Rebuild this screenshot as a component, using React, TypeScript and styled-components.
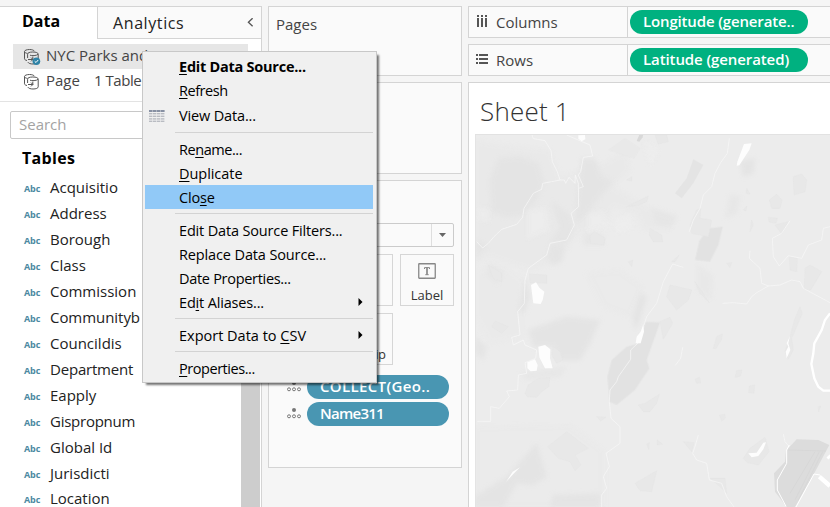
import React from 'react';
import styled, { createGlobalStyle, css } from 'styled-components';

const line = '#d4d4d4';
const panel = '#fafafa';

const Global = createGlobalStyle`
  * { box-sizing: border-box; }
  body { margin: 0; background: #f5f5f5; font-family: 'Open Sans', 'Noto Sans', sans-serif; overflow: hidden; }
  svg { display: block; flex: none; }
`;

const Workspace = styled.div`
  position: relative;
  width: 830px;
  height: 507px;
  padding-top: 6px;
  display: flex;
  gap: 6px;
  overflow: hidden;
  font-size: 15px;
  color: #333;
  white-space: nowrap;
`;

/* ---------- data pane ---------- */

const DataPane = styled.aside`
  width: 262px;
  flex: none;
  display: flex;
  flex-direction: column;
  background: #fff;
  border-top: 1px solid ${line};
  border-right: 1px solid ${line};
`;

const Tabs = styled.div`
  display: flex;
  flex: none;
  height: 32px;
`;

const ActiveTab = styled.div`
  width: 97px;
  padding-left: 22px;
  font: bold 16px/29px 'Open Sans', sans-serif;
  color: #000;
`;

const Tab = styled.div`
  flex: 1;
  display: flex;
  align-items: center;
  justify-content: space-between;
  padding: 0 7px 0 15px;
  background: ${panel};
  border-left: 1px solid ${line};
  border-bottom: 1px solid ${line};
  font-size: 16px;
  letter-spacing: 0.6px;
  color: #222;
`;

const Sources = styled.div`
  flex: none;
  height: 63px;
  padding: 5px 13px 0;
  border-bottom: 1px solid #e3e3e3;
`;

const SourceRow = styled.div<{ $active?: boolean }>`
  display: flex;
  align-items: center;
  width: 235px;
  height: 25px;
  padding-left: 10px;
  gap: 5px;
  line-height: 21px;
  color: #444;
  background: ${p => (p.$active ? '#e6e6e6' : 'transparent')};
`;

const SourceName = styled.span<{ $gap?: number; $spacing?: number }>`
  margin-right: ${p => p.$gap ?? 0}px;
  padding-bottom: 2px;
  letter-spacing: ${p => p.$spacing ?? 0}px;
`;

const SearchBox = styled.div`
  flex: none;
  height: 28px;
  margin: 9px 40px 0 10px;
  padding-left: 8px;
  border: 1px solid #c8c8c8;
  border-radius: 2px;
  line-height: 25px;
  color: #a3a3a3;
`;

const Heading = styled.div`
  flex: none;
  padding-left: 22px;
  font: bold 16px/20px 'Open Sans', sans-serif;
  letter-spacing: 0.3px;
  color: #000;
`;

const TablesArea = styled.div`
  display: flex;
  flex: 1;
  min-height: 0;
  padding: 9px 1px 0 0;
`;

const FieldColumn = styled.div`
  flex: 1;
`;

const FieldList = styled.div`
  padding-top: 7px;
`;

const Field = styled.div`
  display: flex;
  align-items: center;
  height: 26px;
  padding-left: 24px;
  line-height: 21px;
  color: #222;
  &:last-child { height: 24px; padding-top: 1px; }
`;

const TypeTag = styled.span`
  width: 26px;
  font-size: 9px;
  font-weight: 700;
  letter-spacing: -0.1px;
  color: #4b89a1;
`;

const FieldName = styled.span<{ $spacing?: number }>`
  padding-bottom: 2px;
  letter-spacing: ${p => p.$spacing ?? 0}px;
`;

const Scrollbar = styled.div`
  width: 19px;
  background: #cdcdcd;
`;

/* ---------- cards ---------- */

const Cards = styled.section`
  width: 194px;
  flex: none;
  display: flex;
  flex-direction: column;
  gap: 6px;
`;

const Card = styled.div<{ $height: number }>`
  height: ${p => p.$height}px;
  flex: none;
  background: ${panel};
  border: 1px solid ${line};
`;

const CardTitle = styled.div`
  padding: 6px 7px 0;
  line-height: 22px;
  color: #444;
`;

const MarksCard = styled(Card)`
  padding: 42px 7px 0 9px;
`;

const MarkType = styled.div`
  display: flex;
  justify-content: flex-end;
  height: 24px;
  margin-bottom: 7px;
  border: 1px solid #cbcbcb;
  border-radius: 2px;
`;

const DropButton = styled.div`
  display: grid;
  place-items: center;
  width: 22px;
  border-left: 1px solid #dedede;
`;

const MarkGrid = styled.div`
  display: grid;
  grid-template-columns: repeat(3, 54px);
  grid-auto-rows: 52px;
  gap: 7px;
`;

const MarkButton = styled.div<{ $spacing?: number }>`
  display: flex;
  flex-direction: column;
  align-items: center;
  justify-content: flex-end;
  gap: 7px;
  padding-bottom: 1px;
  border: 1px solid #d6d6d6;
  font-size: 13px;
  line-height: 18px;
  letter-spacing: ${p => p.$spacing ?? 0}px;
  color: #333;
`;

const MarkPills = styled.div`
  display: flex;
  flex-direction: column;
  gap: 3px;
  padding: 10px 4px 0 9px;
`;

const MarkRow = styled.div`
  display: flex;
  align-items: center;
  gap: 6px;
  height: 24px;
`;

const Pill = styled.div<{ $tone: 'green' | 'blue'; $spacing?: number }>`
  height: 24px;
  padding: 0 0 0 13px;
  border-radius: 12px;
  color: #fff;
  font-weight: 600;
  line-height: 23px;
  letter-spacing: ${p => p.$spacing ?? 0}px;
  ${p =>
    p.$tone === 'green'
      ? css`width: 178px; background: #00b180;`
      : css`width: 142px; background: #4996b2;`}
`;

/* ---------- view ---------- */

const View = styled.main`
  flex: 1;
  display: flex;
  flex-direction: column;
  gap: 6px;
  min-width: 0;
`;

const Shelf = styled.div`
  display: flex;
  flex: none;
  height: 32px;
  background: ${panel};
  border: 1px solid ${line};
  border-right: 0;
`;

const ShelfLabel = styled.div`
  display: flex;
  align-items: center;
  width: 159px;
  padding-left: 7px;
  gap: 7px;
  border-right: 1px solid ${line};
  color: #444;
`;

const ShelfDrop = styled.div`
  padding: 3px 2px;
`;

const Sheet = styled.div`
  flex: 1;
  padding-left: 6px;
  background: #fff;
  border-top: 1px solid ${line};
  border-left: 1px solid ${line};
`;

const SheetTitle = styled.div`
  height: 51px;
  padding: 9px 0 0 5px;
  font-size: 26px;
  font-weight: 300;
  line-height: 38px;
  letter-spacing: 0.2px;
  color: #333;
`;

/* ---------- context menu ---------- */

const Menu = styled.div`
  position: absolute;
  left: 142px;
  top: 51px;
  width: 235px;
  height: 332px;
  padding: 3px 3px 0 2px;
  background: #f0f0f0;
  border: 1px solid #c8c8c8;
  box-shadow: 3px 3px 2px -1px rgba(0, 0, 0, 0.55);
  color: #000;
`;

const Item = styled.div<{ $active?: boolean; $bold?: boolean; $tall?: boolean; $lift?: boolean; $spacing: number }>`
  display: flex;
  align-items: center;
  height: ${p => (p.$tall ? 25 : 24)}px;
  padding-right: 10px;
  padding-bottom: ${p => (p.$lift ? 2 : 0)}px;
  font-size: 14.5px;
  font-weight: ${p => (p.$bold ? 700 : 400)};
  letter-spacing: ${p => p.$spacing}px;
  background: ${p => (p.$active ? '#91c9f7' : 'transparent')};
`;

const ItemIcon = styled.span`
  width: 34px;
  padding-left: 4px;
`;

const ItemText = styled.span`
  flex: 1;
  u { text-decoration-thickness: 1px; text-underline-offset: 2px; text-decoration-skip-ink: none; }
`;

const Separator = styled.div`
  height: 9px;
  padding-top: 4px;
  margin-left: 30px;
  &::after { content: ''; display: block; height: 1px; background: #d3d3d3; }
`;

/* ---------- icons ---------- */

const SourceIcon = ({ linked }: { linked?: boolean }) => (
  <svg width="18" height="18" viewBox="0 0 18 18" fill="none" stroke="#555" strokeWidth="1">
    <path d="M4 12.5C2.5 12.2 1.5 11.6 1.5 10.8V3.5C1.5 2.4 3.7 1.5 6.5 1.5C9 1.5 11 2.2 11.4 3.2" />
    <path d="M1.5 3.8C1.8 4.6 3 5.2 4.5 5.4" />
    <path d="M4.6 10V6.2C4.6 4.8 6.5 4 9.8 4S15.2 4.8 15.2 6.2V13.8C15.2 15.2 13 16 10 16C7.6 16 5.6 15.4 4.9 14.2" />
    <path d="M7 7.2C8.6 7.9 13.6 7.9 15.2 6.2" />
    <path d="M5 11.5H9.8V8.6M8 13.4L9.9 11.5L8 9.6" />
    {linked && (
      <>
        <circle cx="13.4" cy="13.2" r="3.8" fill="#2f83a6" stroke="none" />
        <path d="M11.7 13.3L13 14.5L15.2 12" stroke="#fff" />
      </>
    )}
  </svg>
);

const TableIcon = () => (
  <svg width="16" height="12" viewBox="0 0 16 12">
    {[0, 4, 8, 12].map(x => (
      <g key={x} fill="#b9bcc2">
        <rect x={x} y="0" width="3.6" height="2" fill="#8790a3" />
        {[3, 5.6, 8.2, 10.6].map(y => (
          <rect key={y} x={x} y={y} width="3.4" height="1.4" />
        ))}
      </g>
    ))}
  </svg>
);

const DetailIcon = () => (
  <svg width="14" height="12" viewBox="0 0 14 12" fill="none" stroke="#777">
    <circle cx="7" cy="2.1" r="2" fill="#777" stroke="none" />
    <circle cx="2" cy="8.3" r="1.5" />
    <circle cx="7" cy="8.3" r="1.5" />
    <circle cx="12" cy="8.3" r="1.5" />
  </svg>
);

const LabelIcon = () => (
  <svg width="18" height="16" viewBox="0 0 18 16" fill="none" stroke="#888">
    <rect x="0.75" y="0.75" width="16.5" height="14.5" rx="0.5" strokeWidth="1.3" />
    <path d="M6.5 6V4.6H11.5V6M7.3 11.7H10.7" strokeWidth="1" />
    <path d="M9 4.5V11.7" strokeWidth="1.7" />
  </svg>
);

const ColumnsIcon = () => (
  <svg width="13" height="14" viewBox="0 0 13 14" fill="#555">
    {[1, 5, 9].map(x => (
      <g key={x}>
        <rect x={x} y="0" width="2" height="2" />
        <rect x={x} y="3" width="2" height="9" />
      </g>
    ))}
  </svg>
);

const RowsIcon = () => (
  <svg width="13" height="14" viewBox="0 0 13 14" fill="#555">
    {[1, 5, 9].map(y => (
      <g key={y}>
        <rect x="0" y={y} width="2" height="2" />
        <rect x="3" y={y} width="9" height="2" />
      </g>
    ))}
  </svg>
);

const Chevron = () => (
  <svg width="7" height="10" viewBox="0 0 7 10" fill="none" stroke="#555" strokeWidth="1.3">
    <path d="M5.6 0.2L1.4 4.2L5.6 8.2" />
  </svg>
);

const Submenu = () => (
  <svg width="5" height="8" viewBox="0 0 5 8">
    <path d="M0.5 0L4.5 4L0.5 8Z" />
  </svg>
);

const Basemap = () => (
  <svg width="355" height="373" viewBox="15 12 1065 1119">
    <defs>
      <filter id="soft" x="-20%" y="-20%" width="140%" height="140%">
        <feGaussianBlur stdDeviation="6" />
      </filter>
    </defs>
    <rect x="15" y="12" width="1065" height="1119" fill="#ececec" />
    <g filter="url(#soft)" fill="#e9e9e9">
      <path d="M15 30L60 40L240 60L270 140L400 100L470 60L480 120L430 170L540 235L620 265L600 300L520 300L500 250L430 230L400 290L330 310L250 400L180 420L60 380L15 400Z" />
      <path d="M15 420L100 400L160 450L160 620L60 640L15 560Z" opacity=".7" />
      <path d="M350 430L450 420L520 470L480 560L400 530Z" opacity=".5" />
      <path d="M15 890L300 885L400 960L400 1131L15 1131Z" opacity=".5" />
    </g>
    <g filter="url(#soft)" fill="#e4e4e4">
      <path d="M85 85L150 80L205 100L220 160L200 210L160 255L110 262L65 245L60 150Z" />
      <path d="M335 85L375 85L395 140L430 155L385 205L350 250L315 285L322 190Z" />
      <path d="M245 215L300 255L310 300L290 340L240 335L270 290Z" opacity=".8" />
      <path d="M245 340L285 350L275 395L250 405L230 380Z" />
      <path d="M175 600L290 560L390 570L360 640L330 690L270 690L250 650L190 650Z" />
      <path d="M165 440L180 500L165 545L145 545Z" />
      <path d="M15 1131L15 1100L110 1040L200 940L230 1040L190 1065L140 1060L100 1131Z" />
      <path d="M510 490L530 500L510 570L495 600L488 560Z" />
      <path d="M810 95L855 85L850 130L820 140Z" />
      <path d="M545 235L620 260L600 290L560 280Z" opacity=".7" />
      <path d="M340 310L400 315L400 345L340 345Z" opacity=".7" />
      <path d="M250 1095L390 1090L390 1131L240 1131Z" />
      <path d="M780 195L810 200L800 250L765 265Z" opacity=".5" />
      <path d="M680 400L730 440L725 510L680 480Z" opacity=".4" />
      <path d="M15 330L50 345L20 385ZM15 620L50 650L40 690L15 670Z" opacity=".8" />
      <path d="M60 400L100 430L80 460L50 430ZM150 730L290 710L270 740L170 750Z" opacity=".5" />
    </g>
    <g filter="url(#soft)" fill="#efefef" opacity=".7">
      <path d="M20 230L60 235L60 280L20 270ZM170 240L230 230L240 300L170 330ZM350 250L400 240L420 290L350 305ZM520 30L570 60L540 110ZM430 270L480 250L490 300L440 310Z" opacity=".7" />
    </g>
    <g fill="#e2e2e2">
      <path d="M527 576L570 577L530 690L538 715L495 780L440 825L418 815L412 740L425 690L470 650L505 640Z" />
      <path d="M688 333L715 295L758 290L745 345L720 395L675 390Z" />
      <path d="M670 88L700 105L670 160L635 205L615 190L650 145Z" opacity=".8" />
      <path d="M520 12L518 22L508 35L500 33L508 14Z" fill="#d9d9d9" />
    </g>
    <g fill="#e8e8e8" stroke="#e4e4e4" strokeWidth="1.2">
      <path d="M970 140L995 132L1010 150L1005 185L972 195Z" />
      <path d="M898 210L920 193L936 210L930 235L905 235Z" />
      <path d="M680 240L692 235L690 265L725 270L715 320L665 310L660 285Z" />
      <path d="M540 295L575 315L578 335L550 335L538 315Z" />
      <path d="M360 318L372 305L405 325L402 345L362 340Z" />
      <path d="M178 432L230 435L230 460L180 458Z" />
      <path d="M55 405L95 430L95 455L70 445Z" />
      <path d="M65 590L75 573L115 590L95 610Z" />
      <path d="M600 465L665 480L655 510L620 540L590 500Z" />
      <path d="M570 575L600 562L608 580L580 628Z" />
      <path d="M165 790L175 765L205 745L240 743L236 770L215 785L200 802L172 800Z" />
      <path d="M505 825L525 820L568 793L560 820L540 845L520 845Z" />
      <path d="M730 655L740 620L757 612L755 628L738 656Z" />
      <path d="M795 742L800 722L816 720L812 738Z" />
      <path d="M838 768L854 765L852 790L836 788Z" />
      <path d="M748 855L765 853L766 865L755 873Z" />
      <path d="M675 748L688 742L692 758L680 760Z" />
      <path d="M1005 415L1020 405L1055 425L1022 480L1003 478Z" />
      <path d="M958 380L982 385L980 425L960 420Z" />
      <path d="M975 565L990 530L997 550L965 625L970 660L955 688L945 665L960 620Z" />
      <path d="M233 950L290 905L355 955L315 975L333 1005L315 1022L300 995L265 985Z" />
      <path d="M820 985L840 955L885 922L897 965L865 1005L832 998Z" />
      <path d="M495 1060L560 1022L545 1085L510 1082Z" />
      <path d="M415 60L465 25L510 55L492 85Z" opacity=".6" />
      <path d="M555 15L590 15L595 35L565 42Z" />
      <path d="M915 285L955 275L935 312ZM895 262L922 265L918 280L897 276Z" />
      <path d="M470 230L535 198L530 215L505 225Z" />
      <path d="M250 650L270 665L278 690L260 700L245 675Z" />
      <path d="M640 935L672 938L665 965ZM380 860L408 862L392 873ZM562 930L577 942L562 945ZM530 942L538 938L536 958Z" />
      <path d="M770 400L785 398L780 413ZM675 455L718 518L690 490ZM470 150L485 140L485 153ZM820 240L830 228L828 243ZM845 270L850 285L840 305ZM605 395L628 375L615 395ZM475 395L488 390L485 410Z" />
      <path d="M720 1045L765 1045L770 1090L750 1070ZM1045 830L1052 828L1046 845ZM830 175L840 192L828 190Z" />
    </g>
    <g fill="none" stroke="#f7f7f7" strokeWidth="2.2">
      <path d="M185 12L190 26L225 32L243 62L247 95L262 125L270 150L245 155L218 160L215 178L190 190L162 235L158 262L140 283L95 298L72 320L55 340L38 354L20 335" />
      <path d="M270 150L283 150L287 160L297 142L315 160L316 135L325 160L326 230L303 250L313 285L290 330L240 340L230 375L175 415L165 450L163 520L143 545L150 615L125 622L130 645L160 630L165 645L200 660L197 685L165 698L170 730L145 735L143 780L110 783L118 800L88 835L62 830L62 874L22 874" />
      <path d="M290 15L360 45L368 78L340 82L332 125L325 135L340 170L326 175" />
      <path d="M778 25L772 70L752 98L735 130L725 170L700 195L690 235L670 270L658 305" />
      <path d="M640 412L608 402L580 455L560 520L530 560L522 585" strokeWidth="2" />
      <path d="M505 638L482 660L482 688L445 740L440 755L420 780L418 815L423 865L450 890L450 940L408 970L418 1010L400 1040L410 1075L395 1095L395 1131" />
      <path d="M840 362L838 385L870 415L875 460L895 468L930 465L965 450L990 455L1000 475L1080 518" />
      <path d="M895 468L860 488L845 500L830 522L790 518L758 520" />
      <path d="M960 272L935 310L907 325L910 380L928 408L955 377L995 385L1015 345L1055 330L1060 295L1080 290" />
      <path d="M685 915L675 950L668 970L680 990L710 1000L718 1050L755 1060L770 1100L792 1131" />
      <path d="M638 652L632 685L616 706M940 912L945 935L958 950" />
    </g>
    <g fill="#fdfdfd">
      <path d="M183 465L198 457L208 473L223 485L218 510L212 522L190 520L186 490Z" />
      <path d="M205 650L225 645L241 658L240 685L248 715L225 715L208 682Z" />
      <path d="M172 697L195 688L203 705L200 722L182 724L172 715Z" />
      <path d="M802 95L822 42L845 40L838 60L808 106L800 107Z" />
      <path d="M520 583L522 605L512 640L497 640L500 620L512 605Z" />
      <path d="M325 16L345 15L346 28L335 34L325 26Z" />
      <path d="M835 970L860 968L880 938L888 937L880 958L865 978L845 982Z" />
      <path d="M108 1056L128 1025L150 1012L130 1032Z" />
      <path d="M960 618L955 640L961 660L950 685L947 665L955 650L950 640Z" />
    </g>
    <path d="M948 962L980 928L1045 930L1078 945L1030 1035L975 1131L950 1131L915 1085L912 1030L945 995Z" fill="#dcdcdc" />
    <path d="M955 960L1068 963M1058 965L985 1110M1048 965L975 1110M1035 965L960 1090" stroke="#d5d5d5" strokeWidth="2" fill="none" />
    <path d="M958 945L950 960L950 1000L922 1050L922 1080L948 1129M978 1131L1032 1032L1050 1035" stroke="#fff" strokeWidth="3" fill="none" />
    <path d="M1080 550L1065 570L1055 600L1033 640L1030 670L1024 702L1033 745L1045 770L1060 782L1080 782" stroke="#fff" strokeWidth="7" fill="none" />
    <path d="M1048 1040L1080 1068M1074 978L1080 984" stroke="#fff" strokeWidth="13" fill="none" />
    <path d="M15 13.5H1080M16 12V1131" stroke="#e2e2e2" strokeWidth="3" />
  </svg>
);

const fields: [string, number][] = [
  ['Acquisitio', 0], ['Address', 0], ['Borough', 0], ['Class', 0], ['Commission', 0],
  ['Communityb', -0.05], ['Councildis', 0], ['Department', -0.2], ['Eapply', 0],
  ['Gispropnum', -0.25], ['Global Id', 0], ['Jurisdicti', 0], ['Location', 0],
];

export default function App() {
  return (
    <>
      <Global />
      <Workspace>
        <DataPane>
          <Tabs>
            <ActiveTab>Data</ActiveTab>
            <Tab>Analytics<Chevron /></Tab>
          </Tabs>
          <Sources>
            <SourceRow $active>
              <SourceIcon linked />
              <SourceName>NYC Parks and</SourceName>
            </SourceRow>
            <SourceRow>
              <SourceIcon />
              <SourceName $gap={9}>Page</SourceName>
              <SourceName $spacing={-0.45}>1 Table</SourceName>
            </SourceRow>
          </Sources>
          <SearchBox>Search</SearchBox>
          <TablesArea>
            <FieldColumn>
              <Heading>Tables</Heading>
              <FieldList>
                {fields.map(([name, spacing]) => (
                  <Field key={name}>
                    <TypeTag>Abc</TypeTag>
                    <FieldName $spacing={spacing}>{name}</FieldName>
                  </Field>
                ))}
              </FieldList>
            </FieldColumn>
            <Scrollbar />
          </TablesArea>
        </DataPane>

        <Cards>
          <Card $height={70}><CardTitle>Pages</CardTitle></Card>
          <Card $height={92} />
          <MarksCard $height={288}>
            <MarkType>
              <DropButton>
                <svg width="7" height="4" viewBox="0 0 7 4"><path d="M0 0H7L3.5 4Z" fill="#666" /></svg>
              </DropButton>
            </MarkType>
            <MarkGrid>
              <MarkButton />
              <MarkButton />
              <MarkButton><LabelIcon />Label</MarkButton>
              <MarkButton />
              <MarkButton $spacing={-0.4}>Tooltip</MarkButton>
            </MarkGrid>
            <MarkPills>
              <MarkRow><DetailIcon /><Pill $tone="blue" $spacing={0.35}>COLLECT(Geo..</Pill></MarkRow>
              <MarkRow><DetailIcon /><Pill $tone="blue" $spacing={-0.75}>Name311</Pill></MarkRow>
            </MarkPills>
          </MarksCard>
        </Cards>

        <View>
          <Shelf>
            <ShelfLabel><ColumnsIcon />Columns</ShelfLabel>
            <ShelfDrop><Pill $tone="green" $spacing={-0.15}>Longitude (generate..</Pill></ShelfDrop>
          </Shelf>
          <Shelf>
            <ShelfLabel><RowsIcon />Rows</ShelfLabel>
            <ShelfDrop><Pill $tone="green" $spacing={-0.1}>Latitude (generated)</Pill></ShelfDrop>
          </Shelf>
          <Sheet>
            <SheetTitle>Sheet 1</SheetTitle>
            <Basemap />
          </Sheet>
        </View>

        <Menu>
          <Item $bold $lift $spacing={-0.25}><ItemIcon /><ItemText><u>E</u>dit Data Source...</ItemText></Item>
          <Item $lift $spacing={-0.45}><ItemIcon /><ItemText><u>R</u>efresh</ItemText></Item>
          <Item $tall $spacing={-0.15}><ItemIcon><TableIcon /></ItemIcon><ItemText>View Data...</ItemText></Item>
          <Separator />
          <Item $spacing={-0.45}><ItemIcon /><ItemText>Re<u>n</u>ame...</ItemText></Item>
          <Item $spacing={-0.05}><ItemIcon /><ItemText><u>D</u>uplicate</ItemText></Item>
          <Item $active $spacing={-0.2}><ItemIcon /><ItemText>Clo<u>s</u>e</ItemText></Item>
          <Separator />
          <Item $spacing={-0.16}><ItemIcon /><ItemText>Edit Data Source Filters...</ItemText></Item>
          <Item $spacing={-0.13}><ItemIcon /><ItemText>Replace Data Source...</ItemText></Item>
          <Item $spacing={-0.3}><ItemIcon /><ItemText>Date Properties...</ItemText></Item>
          <Item $spacing={-0.17}><ItemIcon /><ItemText>Ed<u>i</u>t Aliases...</ItemText><Submenu /></Item>
          <Separator />
          <Item $spacing={0}><ItemIcon /><ItemText>Export Data to <u>C</u>SV</ItemText><Submenu /></Item>
          <Separator />
          <Item $spacing={-0.45}><ItemIcon /><ItemText><u>P</u>roperties...</ItemText></Item>
        </Menu>
      </Workspace>
    </>
  );
}
